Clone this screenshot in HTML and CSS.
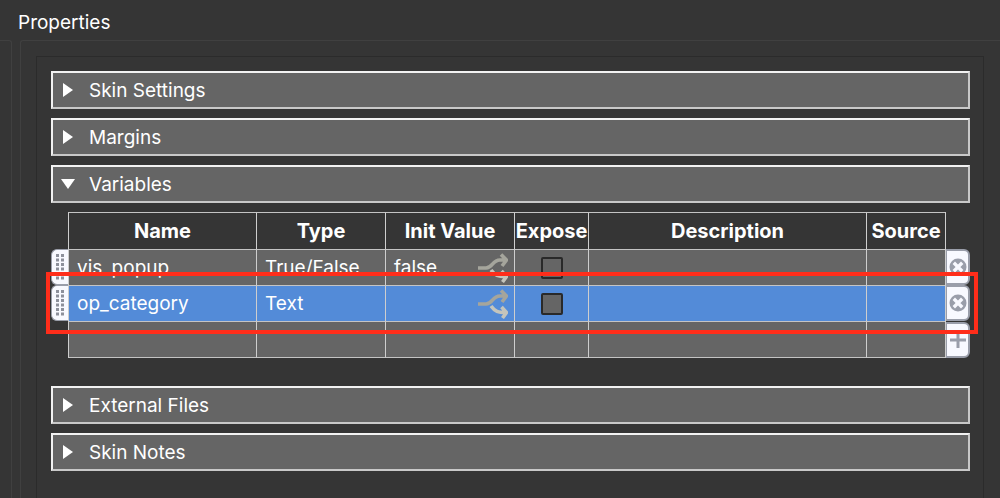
FILE: index.html
```html
<!DOCTYPE html>
<html lang="en">
<head>
<meta charset="utf-8">
<title>Properties</title>
<link rel="stylesheet" href="styles.css">
</head>
<body>
<svg class="sprites" aria-hidden="true">
  <symbol id="closed" viewBox="0 0 14 14"><path d="M2 0L12 7L2 14Z" fill="#fff"/></symbol>
  <symbol id="open" viewBox="0 0 14 14"><path d="M0 2H14L7 12Z" fill="#fff"/></symbol>
  <symbol id="branch" viewBox="0 0 30 30">
    <g fill="none" stroke-width="3.6">
      <path d="M13 17C17 22.500 20 23.500 28 23.500M23.500 18L28.500 23.500L24.500 29" stroke="#c5c5bc"/>
      <path d="M0 15H8C15 15 14 7 22 7H28M23 1.500L28.500 7L24 13" stroke="#a5a59c"/>
    </g>
  </symbol>
  <symbol id="remove" viewBox="0 0 18 18">
    <circle cx="9" cy="9" r="8.500" fill="#9a9eaa"/>
    <path d="M4.800 4.800L13.200 13.200M13.200 4.800L4.800 13.200" stroke="#f8f9ff" stroke-width="3.400"/>
  </symbol>
  <symbol id="add" viewBox="0 0 18 18"><path d="M9 1V17M1 9H17" stroke="#9a9eaa" stroke-width="3"/></symbol>
  <symbol id="grip" viewBox="0 0 8 26">
    <path d="M1.500 0V26M6.500 0V26" stroke="#8d909b" stroke-width="3" stroke-dasharray="3 1.500"/>
  </symbol>
</svg>
<div class="window">
  <aside class="neighbor"></aside>
  <main class="properties">
    <h1 class="title">Properties</h1>
    <div class="group">
      <div class="panel">
        <button class="bar"><svg class="caret"><use href="#closed"/></svg>Skin Settings</button>
        <button class="bar"><svg class="caret"><use href="#closed"/></svg>Margins</button>
        <button class="bar" aria-expanded="true"><svg class="caret"><use href="#open"/></svg>Variables</button>
        <div class="variables">
          <table class="grid">
            <colgroup><col class="c-grip"><col class="c-name"><col class="c-type"><col class="c-init"><col class="c-expose"><col><col class="c-source"><col class="c-action"></colgroup>
            <thead>
              <tr><td class="side"></td><th>Name</th><th>Type</th><th>Init Value</th><th>Expose</th><th>Description</th><th>Source</th><td class="side end"></td></tr>
            </thead>
            <tbody>
              <tr>
                <td class="side"><button class="handle" aria-label="Move vis_popup"><svg class="dots"><use href="#grip"/></svg></button></td>
                <td>vis_popup</td><td>True/False</td>
                <td><div class="init"><span>false</span><button class="link" aria-label="Bind vis_popup"><svg class="arrows"><use href="#branch"/></svg></button></div></td>
                <td class="center"><input class="check" type="checkbox" aria-label="Expose vis_popup"></td><td></td><td></td>
                <td class="side end"><button class="action" aria-label="Remove vis_popup"><svg class="sign"><use href="#remove"/></svg></button></td>
              </tr>
              <tr class="selected">
                <td class="side"><button class="handle" aria-label="Move op_category"><svg class="dots"><use href="#grip"/></svg></button></td>
                <td>op_category</td><td>Text</td>
                <td><div class="init"><span></span><button class="link" aria-label="Bind op_category"><svg class="arrows"><use href="#branch"/></svg></button></div></td>
                <td class="center"><input class="check" type="checkbox" aria-label="Expose op_category"></td><td></td><td></td>
                <td class="side end"><button class="action" aria-label="Remove op_category"><svg class="sign"><use href="#remove"/></svg></button></td>
              </tr>
              <tr class="last">
                <td class="side"></td><td></td><td></td><td></td><td></td><td></td><td></td>
                <td class="side end"><button class="action" aria-label="Add variable"><svg class="sign"><use href="#add"/></svg></button></td>
              </tr>
            </tbody>
          </table>
          <div class="highlight"></div>
        </div>
        <button class="bar"><svg class="caret"><use href="#closed"/></svg>External Files</button>
        <button class="bar"><svg class="caret"><use href="#closed"/></svg>Skin Notes</button>
      </div>
    </div>
  </main>
</div>
</body>
</html>
```
FILE: styles.css
```css
* { box-sizing: border-box; }
body {
  margin: 0;
  background: #353535;
  color: #fff;
  font: 19px/24px Inter, "Liberation Sans", sans-serif;
  overflow: hidden;
}
button {
  margin: 0;
  padding: 0;
  border: 0;
  background: none;
  color: inherit;
  font: inherit;
}
svg { display: block; flex: none; }
.sprites { position: absolute; width: 0; height: 0; }
.window { display: flex; min-height: 100vh; }
.neighbor {
  width: 12px;
  margin-top: 40px;
  border: 1px solid #404040;
  border-left: 0;
  border-bottom: 0;
  border-top-right-radius: 3px;
}
.properties {
  flex: 1;
  min-width: 0;
  display: flex;
  flex-direction: column;
  padding-left: 8px;
}
.title {
  margin: 0;
  height: 40px;
  padding: 11px 0 0;
  margin-left: -2px;
  font-size: 19px;
  font-weight: 400;
}
.group {
  flex: 1;
  display: flex;
  border: 1px solid #404040;
  border-right: 0;
  border-bottom: 0;
  border-top-left-radius: 3px;
  padding: 15px 16px 0 15px;
}
.panel {
  flex: 1;
  min-width: 0;
  border: 1px solid #2b2b2b;
  border-bottom: 0;
  padding: 14px 13px 14px 14px;
  display: flex;
  flex-direction: column;
  gap: 9px;
}
.bar {
  display: flex;
  align-items: center;
  gap: 14px;
  height: 38px;
  padding: 2px 0 0 8px;
  border: 2px solid #c8c8c8;
  border-top-color: #f2f2f2;
  border-left-color: #f2f2f2;
  background: #656565;
  text-align: left;
}
.caret { width: 14px; height: 14px; margin-bottom: 3px; }
.variables { position: relative; margin-bottom: 19px; }
.grid {
  width: 100%;
  table-layout: fixed;
  border-collapse: separate;
  border-spacing: 0;
}
.c-grip { width: 17px; }
.c-name { width: 188px; }
.c-type, .c-init { width: 129px; }
.c-expose { width: 74px; }
.c-source { width: 79px; }
.c-action { width: 25px; }
th, td {
  height: 36px;
  padding: 0;
  border-top: 1px solid #c4c4c4;
  border-left: 1px solid #cecece;
}
th { height: 37px; font-size: 20px; font-weight: 700; white-space: nowrap; }
td { padding-left: 8px; background: #656565; }
.last td { height: 37px; border-bottom: 1px solid #c4c4c4; }
.selected td { background: #538bd8; }
.grid .side { border: 0; padding: 0; background: none; }
.grid .end { border-left: 1px solid #cecece; }
.center { padding: 0; text-align: center; }
.init { display: flex; justify-content: space-between; align-items: center; padding-right: 6px; }
.arrows { width: 30px; height: 30px; }
.check {
  appearance: none;
  display: block;
  width: 22px;
  height: 22px;
  margin: 0 auto;
  border: 2px solid #292929;
  border-radius: 2px;
  background: #656565;
}
.handle, .action {
  display: flex;
  align-items: center;
  justify-content: center;
  width: 100%;
  height: 36px;
  background: #f8f9ff;
  border: 2px solid #9a9eaa;
}
.handle { border-right: 0; border-radius: 6px 0 0 6px; border-width: 1px 0 1px 1px; }
.action { border-left-width: 1px; border-radius: 0 6px 6px 0; }
.dots { width: 8px; height: 26px; }
.sign { width: 18px; height: 18px; }
.highlight {
  position: absolute;
  top: 60px;
  left: -5px;
  right: -8px;
  height: 62px;
  border: 4px solid #ff2d1a;
  pointer-events: none;
}
```
